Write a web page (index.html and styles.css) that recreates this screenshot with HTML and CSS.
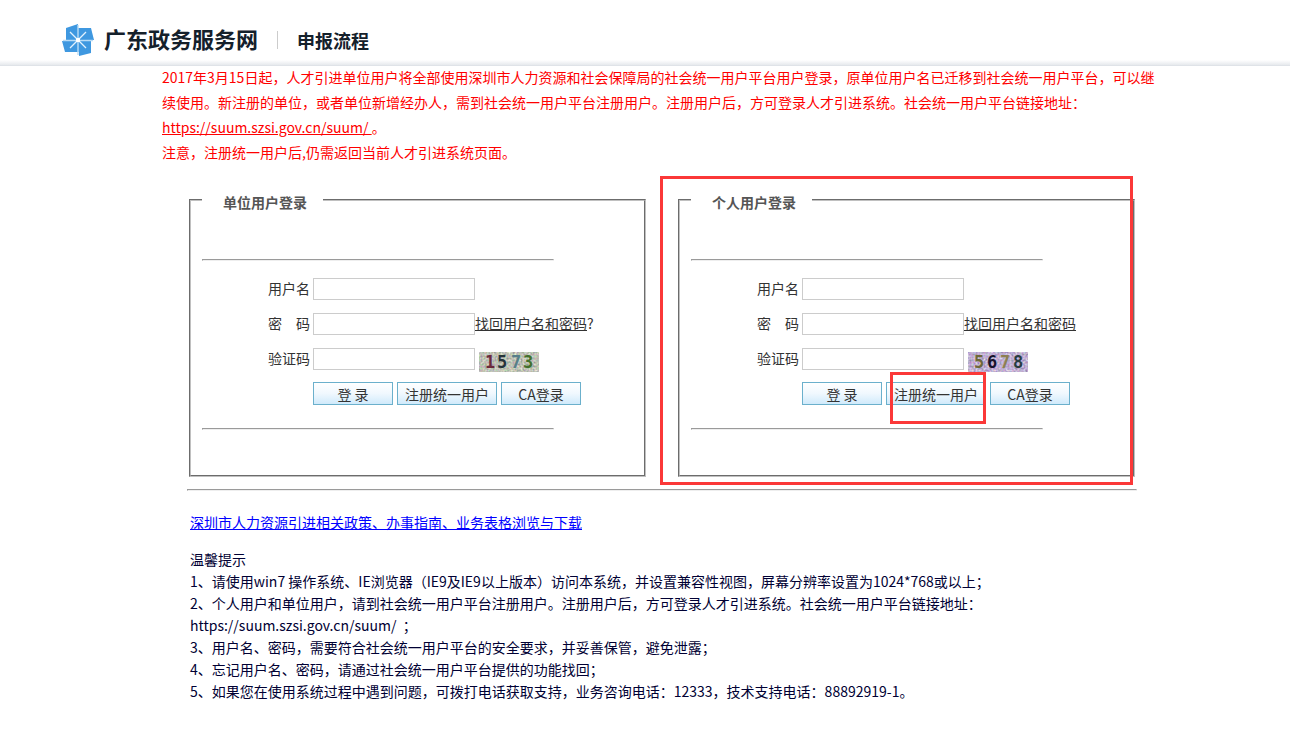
FILE: index.html
```html
<!DOCTYPE html>
<html lang="zh-CN">
<head>
<meta charset="utf-8">
<title>广东政务服务网 - 申报流程</title>
<link rel="stylesheet" href="styles.css">
</head>
<body>
<header class="header">
  <svg class="logo" viewBox="0 0 32 32" aria-hidden="true">
    <path fill="#3f98e0" d="M4 4 16 0V4H29L32 16H29V29L17 32V28H3L0 17H4Z"/>
    <path stroke="#b9dcf6" stroke-width="1.4" d="M16 1V31M1 16.5H31"/>
    <path stroke="#e3f2fd" stroke-width="1.3" d="M8 8 24 24M24 8 8 24"/>
    <rect x="14" y="14" width="4" height="4" rx="1" fill="#fff"/>
  </svg>
  <h1 class="site-name">广东政务服务网</h1>
  <span class="section-name">申报流程</span>
</header>
<main class="main">
  <div class="notice">
    <p>2017年3月15日起，人才引进单位用户将全部使用深圳市人力资源和社会保障局的社会统一用户平台用户登录，原单位用户名已迁移到社会统一用户平台，可以继续使用。新注册的单位，或者单位新增经办人，需到社会统一用户平台注册用户。注册用户后，方可登录人才引进系统。社会统一用户平台链接地址：<a class="notice-link" href="#">https://suum.szsi.gov.cn/suum/&nbsp;</a>。</p>
    <p>注意，注册统一用户后,仍需返回当前人才引进系统页面。</p>
  </div>
  <div class="content">
    <div class="panels">
      <div class="panel">
        <fieldset class="login">
          <legend>单位用户登录</legend>
          <hr class="rule">
          <form class="form">
            <div class="row"><label for="u1">用户名</label><input id="u1" type="text"></div>
            <div class="row"><label for="p1">密　码</label><input id="p1" type="password"><span class="help"><a class="find" href="#">找回用户名和密码</a>?</span></div>
            <div class="row row-code"><label for="c1">验证码</label><input id="c1" type="text">
              <svg class="captcha" viewBox="0 0 60 20" role="img" aria-label="1573">
                <filter id="n1" x="0" y="0" width="100%" height="100%" color-interpolation-filters="sRGB"><feTurbulence type="fractalNoise" baseFrequency="0.5" numOctaves="2" seed="4"/><feColorMatrix values="0.5 0.2 0 0 0.4 0.2 0.5 0 0 0.41 0.2 0.2 0.3 0 0.36 0 0 0 0 1"/></filter>
                <rect width="60" height="20" filter="url(#n1)"/>
                <text x="6" y="16" fill="#6c2a3c">1</text><text x="18" y="16" fill="#26343a">5</text><text x="32" y="16" fill="#567f88">7</text><text x="44" y="16" fill="#43702c">3</text>
              </svg>
            </div>
            <div class="actions"><button type="button">登 录</button><button class="wide" type="button">注册统一用户</button><button type="button">CA登录</button></div>
          </form>
          <hr class="rule">
        </fieldset>
      </div>
      <div class="panel marked">
        <fieldset class="login">
          <legend>个人用户登录</legend>
          <hr class="rule">
          <form class="form">
            <div class="row"><label for="u2">用户名</label><input id="u2" type="text"></div>
            <div class="row"><label for="p2">密　码</label><input id="p2" type="password"><span class="help"><a class="find" href="#">找回用户名和密码</a></span></div>
            <div class="row row-code"><label for="c2">验证码</label><input id="c2" type="text">
              <svg class="captcha" viewBox="0 0 60 20" role="img" aria-label="5678">
                <filter id="n2" x="0" y="0" width="100%" height="100%" color-interpolation-filters="sRGB"><feTurbulence type="fractalNoise" baseFrequency="0.5" numOctaves="2" seed="9"/><feColorMatrix values="0.5 0.2 0 0 0.4 0.2 0.5 0 0 0.34 0.2 0.2 0.3 0 0.47 0 0 0 0 1"/></filter>
                <rect width="60" height="20" filter="url(#n2)"/>
                <text x="6" y="16" fill="#6f6838">5</text><text x="19" y="16" fill="#17132c">6</text><text x="32" y="16" fill="#8d8051">7</text><text x="45" y="16" fill="#293c40">8</text>
              </svg>
            </div>
            <div class="actions"><button type="button">登 录</button><span class="target"><button class="wide" type="button">注册统一用户</button></span><button type="button">CA登录</button></div>
          </form>
          <hr class="rule">
        </fieldset>
      </div>
    </div>
    <hr class="divider">
    <div class="info">
      <a class="policy" href="#">深圳市人力资源引进相关政策、办事指南、业务表格浏览与下载</a>
      <div class="tips">
        <p>温馨提示</p>
        <p>1、请使用win7 操作系统、IE浏览器（IE9及IE9以上版本）访问本系统，并设置兼容性视图，屏幕分辨率设置为1024*768或以上；</p>
        <p>2、个人用户和单位用户，请到社会统一用户平台注册用户。注册用户后，方可登录人才引进系统。社会统一用户平台链接地址：<span class="url">https://suum.szsi.gov.cn/suum/&nbsp; ；</span></p>
        <p>3、用户名、密码，需要符合社会统一用户平台的安全要求，并妥善保管，避免泄露；</p>
        <p>4、忘记用户名、密码，请通过社会统一用户平台提供的功能找回；</p>
        <p>5、如果您在使用系统过程中遇到问题，可拨打电话获取支持，业务咨询电话：12333，技术支持电话：88892919-1。</p>
      </div>
    </div>
  </div>
</main>
</body>
</html>
```
FILE: styles.css
```css
* { box-sizing: border-box; }

body {
  margin: 0;
  background: #fff;
  color: #333;
  font: 14px/22px "Noto Sans CJK SC", sans-serif;
}

p, h1 { margin: 0; }

.header {
  display: flex;
  align-items: center;
  height: 65px;
  padding: 15px 62px 0;
  background: linear-gradient(#fff 60px, #e6e9ed 65px);
  box-shadow: 0 1px 0 #dfe3e8;
  color: #14202b;
}

.logo { width: 32px; height: 32px; }

.site-name {
  margin-left: 10px;
  padding-bottom: 4px;
  font-size: 22px;
  line-height: 32px;
  font-weight: 700;
}

.section-name {
  margin-left: 19px;
  padding-left: 19px;
  border-left: 1px solid #ccc;
  font-size: 18px;
  line-height: 18px;
  font-weight: 700;
}

.main { padding: 0 128px 28px 162px; }

.notice { color: #f00; line-height: 25px; }
.notice-link { color: #f00; }

.content { padding: 22px 25px 0; }

.panels {
  display: grid;
  grid-template-columns: 1fr 1fr;
  gap: 32px;
  padding: 0 2px;
}

.panel { position: relative; }

.marked::after {
  content: "";
  position: absolute;
  inset: -11px 2px -8px -18px;
  border: 3px solid #fb3838;
  pointer-events: none;
}

.login {
  min-width: 0;
  margin: 0;
  padding: 0 11px 45px;
  border: 2px groove #c0c0c0;
}

legend {
  padding: 5px 16px 1px 21px;
  color: #555;
  line-height: 20px;
  font-weight: 700;
}

.rule {
  width: 352px;
  max-width: 100%;
  margin: 46px 0 0;
  border: 1px inset #eee;
}

.form { padding-top: 17px; }
.form + .rule { margin-top: 23px; }

.row {
  display: flex;
  align-items: center;
  height: 22px;
  margin-bottom: 13px;
  white-space: nowrap;
}

.row label {
  width: 111px;
  padding: 0 3px 2px 0;
  line-height: 20px;
  text-align: right;
}

.row input {
  width: 162px;
  height: 22px;
  padding: 0 4px;
  border: 1px solid #ccc;
  background: #fff;
  font: inherit;
}

.row-code { height: 24px; align-items: flex-start; margin-bottom: 10px; }

.help { padding-bottom: 2px; line-height: 20px; }
.find { color: #333; }

.captcha {
  align-self: flex-end;
  width: 60px;
  height: 20px;
  margin-left: 4px;
  font: bold 17px "DejaVu Sans Mono", monospace;
}

.actions { display: flex; gap: 4px; padding-left: 111px; }

button {
  width: 80px;
  height: 23px;
  padding: 0;
  border: 1px solid #6bb0cc;
  background: linear-gradient(#fff, #f0f8fe 50%, #d0eafb);
  color: #333;
  font: inherit;
  white-space: nowrap;
}

.wide { width: 100px; }

.target { position: relative; display: flex; }

.target::after {
  content: "";
  position: absolute;
  inset: -10px 0 -19px 4px;
  border: 3px solid #fb3838;
  pointer-events: none;
}

.divider { margin: 12px 0 0; border: 1px inset #eee; }

.info { padding: 20px 0 0 3px; }
.policy { display: block; width: fit-content; color: #00f; }
.tips { margin-top: 15px; color: #003; }
.url { white-space: nowrap; }
```
